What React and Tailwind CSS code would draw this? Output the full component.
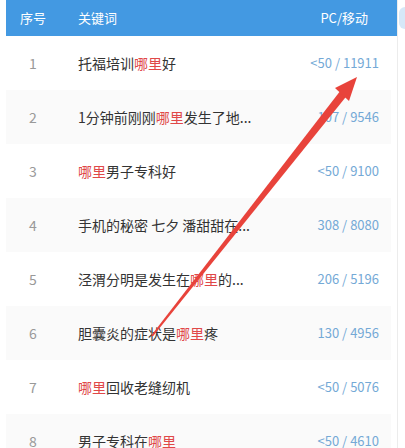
import React from "react";

const rows = [
  { n: 1, parts: ["托福培训", "*哪里", "好"], v: "<50 / 11911" },
  { n: 2, parts: ["1分钟前刚刚", "*哪里", "发生了地..."], v: "107 / 9546" },
  { n: 3, parts: ["*哪里", "男子专科好"], v: "<50 / 9100" },
  { n: 4, parts: ["手机的秘密 七夕 潘甜甜在..."], v: "308 / 8080" },
  { n: 5, parts: ["泾渭分明是发生在", "*哪里", "的..."], v: "206 / 5196" },
  { n: 6, parts: ["胆囊炎的症状是", "*哪里", "疼"], v: "130 / 4956" },
  { n: 7, parts: ["*哪里", "回收老缝纫机"], v: "<50 / 5076" },
  { n: 8, parts: ["男子专科在", "*哪里"], v: "<50 / 4610" },
];

export default function App() {
  return (
    <div
      className="relative w-[405px] h-[448px] overflow-hidden bg-white"
      style={{ fontFamily: '"Noto Sans CJK SC", "Noto Sans", sans-serif' }}
    >
      <div className="flex h-full">
        <div className="ml-[6px] w-[395px] flex flex-col">
          <div className="h-[36px] bg-[#4399e2] flex items-center text-white text-[13px] shrink-0">
            <div className="w-[54px] text-center">序号</div>
            <div className="ml-[18px] flex-1">关键词</div>
            <div className="pr-[29px]">PC/移动</div>
          </div>
          {rows.map((r, i) => (
            <div
              key={r.n}
              className={`h-[54px] shrink-0 flex items-center mr-[6px] ${
                i % 2 === 1 ? "bg-[#fafafa]" : "bg-white"
              }`}
            >
              <div className="w-[54px] text-center text-[14px] text-[#999]">{r.n}</div>
              <div className="ml-[18px] flex-1 text-[14px] text-[#333] whitespace-nowrap">
                {r.parts.map((p, j) =>
                  p.startsWith("*") ? (
                    <span key={j} className="text-[#e04848]">
                      {p.slice(1)}
                    </span>
                  ) : (
                    <span key={j}>{p}</span>
                  )
                )}
              </div>
              <div className="pr-[12px] text-[13px] text-[#74a9d6] whitespace-nowrap">{r.v}</div>
            </div>
          ))}
        </div>
        <div className="flex-1 border-l border-[#ececec] flex flex-col">
          <div className="h-[36px] flex items-center">
            <div className="ml-[1px] w-[6px] h-[22px] rounded-l-full bg-[#d6e8f8]" />
          </div>
        </div>
      </div>
      <svg
        className="absolute left-0 top-0 pointer-events-none"
        width="405"
        height="448"
        viewBox="0 0 405 448"
      >
        <polygon
          points="340,91.2 346,96.8 152.8,336.6 151.2,335.4"
          fill="#e8433b"
        />
        <polygon points="357,77 335,88 349,101" fill="#e8433b" />
      </svg>
    </div>
  );
}
